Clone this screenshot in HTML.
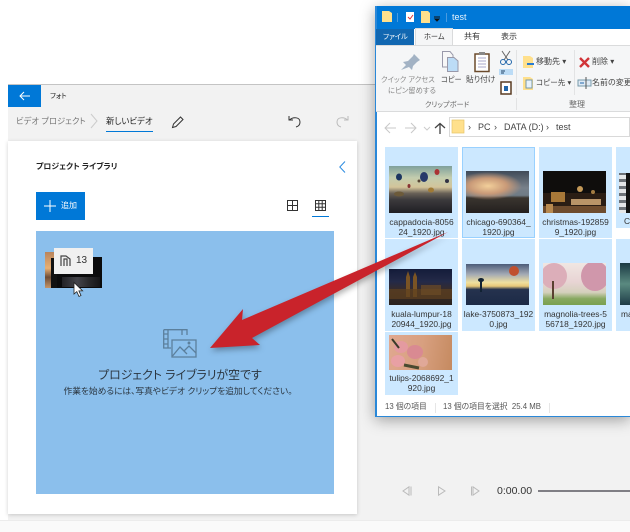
<!DOCTYPE html>
<html><head><meta charset="utf-8">
<style>
html,body{margin:0;padding:0;background:#fff}
#p{position:relative;width:630px;height:532px;overflow:hidden;background:#fff;font-family:"Liberation Sans","Noto Sans CJK JP",sans-serif;color:#222;font-feature-settings:"palt";filter:blur(.3px)}
#p div{position:absolute}
.t{white-space:nowrap;line-height:1}
.cell{background:#cce8ff}
.th{overflow:hidden}
.lb{font-size:8.4px;line-height:10px;text-align:center;color:#333;width:73px;white-space:nowrap}
svg{position:absolute;overflow:visible}
</style></head><body>
<div id="p">
<!-- photos window -->
<div style="left:8px;top:84px;width:622px;height:436px;background:#f2f2f2;border-top:1px solid #c4c4c4"></div>
<div style="left:0;top:520px;width:630px;height:12px;background:#fafafa;border-top:1px solid #ececec"></div>
<div style="left:8px;top:85px;width:33px;height:22px;background:#0078d7"></div>
<svg style="left:19px;top:91px" width="12" height="10" fill="none" stroke="#fff" stroke-width="1"><path d="M1 5H11M5 1L1 5L5 9"/></svg>
<div class="t" style="left:50px;top:93px;font-size:7px;color:#222">フォト</div>
<div class="t" style="left:16px;top:117px;font-size:8.300px;color:#777">ビデオ プロジェクト</div>
<svg style="left:90px;top:113px" width="8" height="16" fill="none" stroke="#ccc"><path d="M1 1L7 8L1 15"/></svg>
<div class="t" style="left:106px;top:117px;font-size:8.400px;color:#222">新しいビデオ</div>
<div style="left:106px;top:131px;width:47px;height:1px;background:#0078d7"></div>
<svg style="left:171px;top:116px" width="13" height="13" fill="none" stroke="#333"><path d="M1.5 11.5L2.5 8L9.5 1L12 3.5L5 10.5Z"/></svg>
<svg style="left:288px;top:115px" width="13" height="13" fill="none" stroke="#333"><path d="M1 1V5H5M1.5 5C5 1.5 12 2 12 7C12 10 10 11.5 8 12"/></svg>
<svg style="left:336px;top:115px" width="13" height="13" fill="none" stroke="#bbb"><path d="M12 1V5H8M11.5 5C8 1.5 1 2 1 7C1 10 3 11.5 5 12"/></svg>
<!-- panel -->
<div style="left:8px;top:141px;width:349px;height:373px;background:#fff;box-shadow:0 1px 4px rgba(0,0,0,.18)"></div>
<div class="t" style="left:36px;top:163px;font-size:7.900px;font-weight:bold;color:#222">プロジェクト ライブラリ</div>
<svg style="left:339px;top:161px" width="7" height="12" fill="none" stroke="#2a8be0"><path d="M6 .5L.8 6L6 11.5"/></svg>
<div style="left:36px;top:192px;width:49px;height:28px;background:#0078d7"></div>
<svg style="left:44px;top:200px" width="12" height="12" stroke="#fff" stroke-width="1"><path d="M6 0V12M0 6H12"/></svg>
<div class="t" style="left:61px;top:202px;font-size:8px;color:#fff">追加</div>
<svg style="left:287px;top:200px" width="11" height="11" fill="none" stroke="#333"><path d="M.5.5H10.5V10.5H.5ZM5.5.5V10.5M.5 5.5H10.500"/></svg>
<svg style="left:315px;top:200px" width="11" height="11" fill="none" stroke="#333"><path d="M.5.5H10.5V10.5H.5ZM3.8.5V10.5M7.2.5V10.5M.5 3.8H10.5M.5 7.2H10.500"/></svg>
<div style="left:312px;top:216px;width:17px;height:1px;background:#0078d7"></div>
<!-- blue area -->
<div style="left:36px;top:231px;width:298px;height:263px;background:#8bbfec"></div>
<div style="left:45px;top:252px;width:12px;height:36px;background:linear-gradient(#b9845c,#e8b074 45%,#6d4c36 70%,#c49468)"></div>
<div style="left:51px;top:258px;width:21px;height:30px;background:#111"></div>
<div style="left:57px;top:257px;width:45px;height:31px;background:#0b0b0c"></div>
<div style="left:62px;top:277px;width:38px;height:10px;background:linear-gradient(90deg,#222226,#44444a 40%,#2a2a2c 70%,#151518)"></div>
<div style="left:54px;top:248px;width:39px;height:26px;background:#f0f0f0"></div>
<svg style="left:60px;top:255px" width="11" height="12" fill="none" stroke="#444" stroke-width="1.2"><path d="M1 11V1H6L10 4V11M4 11V4H7V11"/></svg>
<div class="t" style="left:76px;top:256px;font-size:10px;color:#333">13</div>
<svg style="left:73px;top:282px" width="11" height="16" fill="#fff" stroke="#222" stroke-width=".8"><path d="M1 .5V12L3.8 9.6L6 14.5L8 13.5L5.9 8.9H9.6Z"/></svg>
<svg style="left:163px;top:329px" width="34" height="30" fill="none" stroke="#5b7f9c" stroke-width="1.3"><path d="M.7.7H24V6M8 19H.7V.7M.7 5H5V10M.7 10H5V15H.7M19 .7V6M5 .7V19"/><path d="M9 11H33V28H9Z" fill="#8bbfec"/><path d="M9.500 27L17 18L24 25M21 22L26 17L33 24"/><circle cx="26" cy="14" r=".8"/></svg>
<div class="t" style="left:31px;top:370px;width:298px;text-align:center;font-size:11.900px;color:#2b3640">プロジェクト ライブラリが空です</div>
<div class="t" style="left:29px;top:387px;width:298px;text-align:center;font-size:8.700px;color:#2b3640">作業を始めるには、写真やビデオ クリップを追加してください。</div>
<!-- playback -->
<svg style="left:402px;top:486px" width="90" height="10" fill="none" stroke="#bbb"><path d="M7 .8L1 5L7 9.200ZM9 .5V9.500"/><path d="M36.500 .8L43 5L36.500 9.200Z"/><path d="M69.500 .5V9.500M71 .8L77 5L71 9.200Z"/></svg>
<div class="t" style="left:497px;top:486px;font-size:10.500px;color:#333">0:00.00</div>
<div style="left:538px;top:490px;width:92px;height:2px;background:#807f85"></div>
<!-- explorer -->
<div style="left:375px;top:6px;width:255px;height:411px;background:#fff;box-shadow:0 3px 14px rgba(0,0,0,.35)"></div>
<div style="left:375px;top:6px;width:255px;height:23px;background:#0078d7"></div>
<div style="left:375px;top:6px;width:1.500px;height:411px;background:#2a88d8"></div>
<div style="left:375px;top:415.500px;width:255px;height:1.500px;background:#2a88d8"></div>
<svg style="left:382px;top:11px" width="100" height="14"><path d="M0 0H7L10 2V11H0Z" fill="#ffe08c"/><path d="M15.500 2V11" stroke="#4a9be0"/><path d="M24 1H32V11H24Z" fill="#fff"/><path d="M26 6L28 8L31 4" stroke="#d33" fill="none"/><path d="M39 0H46L48 2V12H39Z" fill="#ffe08c"/><path d="M52 6H58M53 8L55 10L57 8Z" stroke="#111" fill="#111"/><path d="M64.500 2V11" stroke="#4a9be0"/></svg>
<div class="t" style="left:452px;top:13px;font-size:9px;color:#e8f3fc">test</div>
<!-- tabs -->
<div style="left:376px;top:29px;width:254px;height:16px;background:#fff"></div>
<div style="left:376px;top:29px;width:38px;height:16px;background:#1167b1"></div>
<div class="t" style="left:383px;top:33px;font-size:7.200px;color:#fff">ファイル</div>
<div style="left:415px;top:28px;width:38px;height:17px;background:#f5f6f7;border:1px solid #dadbdc;border-bottom:none;box-sizing:border-box"></div>
<div class="t" style="left:424px;top:33px;font-size:7.200px;color:#333">ホーム</div>
<div class="t" style="left:464px;top:33px;font-size:8px;color:#333">共有</div>
<div class="t" style="left:501px;top:33px;font-size:8px;color:#333">表示</div>
<!-- ribbon -->
<div style="left:376px;top:45px;width:254px;height:67px;background:#f5f6f7;border-top:1px solid #dadbdc;border-bottom:1px solid #dadbdc;box-sizing:border-box"></div>
<svg style="left:400px;top:54px" width="24" height="17"><path d="M1 16L6 11L3 8L8 7L13 2L14 0L20 6L17 8L13 12L12 16L9 13Z" fill="#a2b2c4"/></svg>
<div class="t" style="left:381px;top:76px;font-size:7.300px;color:#8a8a8a">クイック アクセス</div>
<div class="t" style="left:388px;top:87px;font-size:7.300px;color:#8a8a8a">にピン留めする</div>
<svg style="left:441px;top:51px" width="20" height="21" stroke="#99a" fill="#f7f7f7"><path d="M1.500.500H9L12 4V16H1.500Z"/><path d="M6.500 6.500H13L17 10V20.500H6.500Z" fill="#bcdcf6"/></svg>
<div class="t" style="left:441px;top:76px;font-size:7.200px;color:#444">コピー</div>
<svg style="left:474px;top:51px" width="16" height="21"><path d="M1 3H15V20.500H1Z" fill="#fff" stroke="#6b4a2b" stroke-width="1.500"/><path d="M5 1H11V4H5Z" fill="#888"/><path d="M4 7H12M4 10H12M4 13H12M4 16H12" stroke="#aac"/></svg>
<div class="t" style="left:466px;top:76px;font-size:7.700px;color:#444">貼り付け</div>
<svg style="left:499px;top:50px" width="14" height="44"><path d="M3 1L9 10M11 1L5 10" stroke="#666"/><circle cx="4" cy="12" r="2.500" fill="none" stroke="#26a"/><circle cx="10" cy="12" r="2.500" fill="none" stroke="#26a"/><path d="M0 19H14V25H0Z" fill="#bcdcf6"/><path d="M2 21H6M2 23H5" stroke="#246"/><path d="M2 32H12V44H2Z" fill="#fff" stroke="#5a3c22" stroke-width="1.500"/><path d="M5 36H9V41H5Z" fill="#26a"/></svg>
<div style="left:516px;top:50px;width:1px;height:45px;background:#e2e3e4"></div>
<svg style="left:523px;top:56px" width="14" height="44"><path d="M0 0H7L10 2V12H0Z" fill="#ffe08c"/><path d="M4 8H11" stroke="#2a7cd0" stroke-width="2"/><path d="M0 21H7L10 23V34H0Z" fill="#ffe08c"/><path d="M3 24H9V32H3Z" fill="#e8f2fb" stroke="#79a"/></svg>
<div class="t" style="left:536px;top:58px;font-size:8px;color:#444">移動先 ▾</div>
<div class="t" style="left:536px;top:79px;font-size:7.600px;color:#444">コピー先 ▾</div>
<div style="left:574px;top:50px;width:1px;height:45px;background:#e2e3e4"></div>
<svg style="left:579px;top:57px" width="11" height="11" stroke="#d13438" stroke-width="2.400"><path d="M1 1L10 10M10 1L1 10"/></svg>
<div class="t" style="left:592px;top:58px;font-size:8px;color:#444">削除 ▾</div>
<svg style="left:578px;top:77px" width="14" height="12"><path d="M0 3H13V9H0Z" fill="#dfeaf5" stroke="#79a"/><path d="M2 6H6" stroke="#26a"/><path d="M8 0V12" stroke="#555"/></svg>
<div class="t" style="left:592px;top:79px;font-size:8px;color:#444">名前の変更</div>
<div class="t" style="left:425px;top:101px;font-size:7.200px;color:#666">クリップボード</div>
<div class="t" style="left:569px;top:101px;font-size:8px;color:#666">整理</div>
<div style="left:516px;top:98px;width:1px;height:12px;background:#e2e3e4"></div>
<!-- address -->
<svg style="left:384px;top:122px" width="62" height="12" fill="none"><path d="M1 6H12M6 1L1 6L6 11" stroke="#c8c8c8"/><path d="M21 6H32M27 1L32 6L27 11" stroke="#c8c8c8"/><path d="M40 5L43 8L46 5" stroke="#ccc"/><path d="M56 12V2M51 6L56 1.500L61 6" stroke="#444" stroke-width="1.300"/></svg>
<div style="left:449px;top:117px;width:181px;height:20px;background:#fff;border:1px solid #d9d9d9;box-sizing:border-box"></div>
<svg style="left:452px;top:120px" width="13" height="14"><path d="M0 0H8L12 0V13H0Z" fill="#ffe08c" stroke="#e8c66a" stroke-width=".7"/></svg>
<div class="t" style="left:468px;top:123px;font-size:9px;color:#444">›</div>
<div class="t" style="left:478px;top:123px;font-size:9px;color:#444">PC</div>
<div class="t" style="left:494px;top:123px;font-size:9px;color:#444">›</div>
<div class="t" style="left:504px;top:123px;font-size:9px;color:#444">DATA (D:)</div>
<div class="t" style="left:546px;top:123px;font-size:9px;color:#444">›</div>
<div class="t" style="left:556px;top:123px;font-size:9px;color:#444">test</div>
<!-- cells -->
<div class="cell" style="left:385px;top:147px;width:73px;height:91px"></div>
<div class="cell" style="left:462px;top:147px;width:73px;height:91px;box-shadow:inset 0 0 0 1px #99d1ff"></div>
<div class="cell" style="left:539px;top:147px;width:73px;height:91px"></div>
<div class="cell" style="left:616px;top:147px;width:14px;height:81px"></div>
<div class="cell" style="left:385px;top:239px;width:73px;height:92px"></div>
<div class="cell" style="left:462px;top:239px;width:73px;height:92px"></div>
<div class="cell" style="left:539px;top:239px;width:73px;height:92px"></div>
<div class="cell" style="left:616px;top:239px;width:14px;height:92px"></div>
<div class="cell" style="left:385px;top:332px;width:73px;height:63px"></div>
<!-- thumbs -->
<div class="th" style="left:389px;top:166px;width:63px;height:47px;background:linear-gradient(#7fa09c 0,#c3cdae 25%,#d3c49a 45%,#6a6258 58%,#3c3a3c 72%,#1f1f24 100%)">
<svg width="63" height="47"><ellipse cx="10" cy="11" rx="3" ry="3.500" fill="#1c3560"/><ellipse cx="35" cy="11" rx="4" ry="5" fill="#27396a"/><ellipse cx="48" cy="6" rx="2.500" ry="3" fill="#a33"/><ellipse cx="58" cy="15" rx="2" ry="2" fill="#334"/><ellipse cx="30" cy="15" rx="1.500" ry="1.500" fill="#543"/><ellipse cx="20" cy="20" rx="1.500" ry="2" fill="#833"/><ellipse cx="42" cy="24" rx="3" ry="2.500" fill="#a07a35"/><ellipse cx="10" cy="28" rx="5" ry="2.500" fill="#6c5a3a"/></svg></div>
<div class="th" style="left:466px;top:171px;width:63px;height:42px;background:radial-gradient(ellipse 34px 14px at 22px 15px,#f2cf9a 0,#c99a78 55%,transparent 100%),linear-gradient(#3f4a58 0,#77808a 40%,#6f7c86 58%,#3a352f 64%,#231f1e 100%)"></div>
<div class="th" style="left:543px;top:171px;width:63px;height:42px;background:#0f0d0c">
<svg width="63" height="42"><rect y="22" width="63" height="20" fill="#2a1d14"/><circle cx="37" cy="18" r="3" fill="#d8a860" opacity=".9"/><circle cx="50" cy="21" r="2" fill="#c89850" opacity=".8"/><rect x="8" y="21" width="14" height="10" fill="#a87838"/><rect x="28" y="28" width="30" height="6" fill="#b89468"/><rect y="35" width="63" height="7" fill="#6e4c2e"/><rect x="3" y="33" width="7" height="9" fill="#b88a50"/></svg></div>
<div style="left:619px;top:173px;width:11px;height:40px;background:#111"></div>
<div style="left:619px;top:173px;width:7px;height:40px;background:repeating-linear-gradient(#6d7278 0 2px,#e4e6e8 2px 6px,#6d7278 6px 7px)"></div>
<div class="th" style="left:389px;top:269px;width:63px;height:36px;background:linear-gradient(#141c3a 0,#242a48 35%,#3a2c26 62%,#2a221e 100%)">
<svg width="63" height="36"><path d="M17 28V8L19 2L21 8V28ZM24 28V8L26 3L28 8V28Z" fill="#7a5424"/><rect x="0" y="20" width="63" height="10" fill="#5e4020" opacity=".7"/><rect x="32" y="16" width="20" height="10" fill="#6c4c26" opacity=".7"/></svg></div>
<div class="th" style="left:466px;top:264px;width:63px;height:41px;background:linear-gradient(#4c5c7a 0,#a3a9b4 25%,#efe0a0 45%,#e8c878 54%,#25324e 62%,#1c2a46 100%)">
<svg width="63" height="41"><ellipse cx="48" cy="7" rx="5" ry="5" fill="#c0502e"/><ellipse cx="15" cy="16" rx="3" ry="2" fill="#123"/><path d="M15 16V28" stroke="#123" stroke-width="2"/></svg></div>
<div class="th" style="left:543px;top:263px;width:63px;height:42px;background:linear-gradient(#f0e6e2 0,#e8d4d4 45%,#d4d0bc 70%,#88a860 85%,#7aa050 100%)">
<svg width="63" height="42"><ellipse cx="52" cy="13" rx="14" ry="15" fill="#d097ab"/><ellipse cx="11" cy="13" rx="13" ry="13" fill="#dcaeb9"/><path d="M10 36V18" stroke="#5a4030" stroke-width="2"/></svg></div>
<div style="left:620px;top:263px;width:10px;height:42px;background:linear-gradient(#1c3a44,#5a8a80 50%,#1f3c48)"></div>
<div class="th" style="left:389px;top:335px;width:63px;height:35px;background:linear-gradient(100deg,#e0a890,#d8a080 50%,#c58a60)">
<svg width="63" height="35"><ellipse cx="12" cy="12" rx="7" ry="6" fill="#e49aa0"/><ellipse cx="26" cy="17" rx="8" ry="7" fill="#d98a92"/><ellipse cx="9" cy="26" rx="7" ry="6" fill="#e8a0a4"/><ellipse cx="34" cy="27" rx="5" ry="5" fill="#e0a898"/><path d="M3 4L10 13" stroke="#3a3a2a" stroke-width="2"/><path d="M15 30L30 33" stroke="#4a4a30" stroke-width="3"/></svg></div>
<!-- labels -->
<div class="lb" style="left:385px;top:217px">cappadocia-8056<br>24_1920.jpg</div>
<div class="lb" style="left:462px;top:217px">chicago-690364_<br>1920.jpg</div>
<div class="lb" style="left:539px;top:217px">christmas-192859<br>9_1920.jpg</div>
<div class="t" style="left:624px;top:217px;font-size:8.400px;color:#333">C</div>
<div class="lb" style="left:385px;top:309px">kuala-lumpur-18<br>20944_1920.jpg</div>
<div class="lb" style="left:462px;top:309px">lake-3750873_192<br>0.jpg</div>
<div class="lb" style="left:539px;top:309px">magnolia-trees-5<br>56718_1920.jpg</div>
<div class="t" style="left:621px;top:310px;font-size:8.400px;color:#333">ma</div>
<div class="lb" style="left:385px;top:373px">tulips-2068692_1<br>920.jpg</div>
<!-- status -->
<div class="t" style="left:385px;top:403px;font-size:7.800px;color:#555">13 個の項目</div>
<div class="t" style="left:443px;top:403px;font-size:7.800px;color:#555">13 個の項目を選択&nbsp; 25.4 MB</div>
<div style="left:435px;top:403px;width:1px;height:10px;background:#e6e6e6"></div>
<div style="left:549px;top:403px;width:1px;height:10px;background:#e6e6e6"></div>
<!-- arrow -->
<svg style="left:0;top:0;filter:drop-shadow(1px 3px 3px rgba(0,0,0,.3))" width="630" height="532"><path d="M448 232L242 320L243 309L210 348L260 345L252 338Z" fill="#c9232b"/></svg>
</div>
</body></html>
